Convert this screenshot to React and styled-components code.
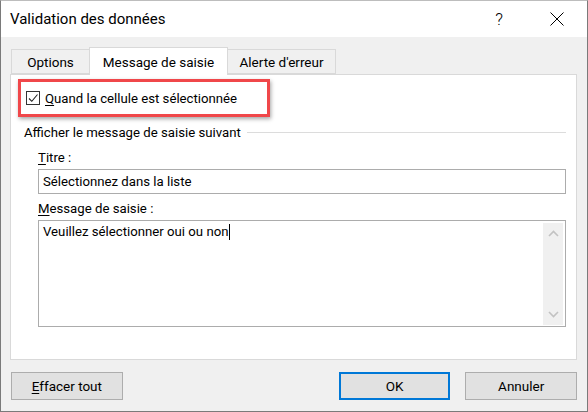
import React from "react";
import styled, { createGlobalStyle } from "styled-components";

const Global = createGlobalStyle`
  html, body { margin: 0; padding: 0; background: #ffffff; }
  body { font-family: Roboto, "Noto Sans", sans-serif; color: #000; }
  * { box-sizing: border-box; }
`;

const Window = styled.div`
  width: 588px;
  height: 412px;
  display: flex;
  flex-direction: column;
  border: 1px solid #7a7a7a;
  border-top-color: #bdbdbd;
  background: #f0f0f0;
  font-size: 13.2px;
`;

const TitleBar = styled.div`
  height: 36px;
  flex: none;
  background: #ffffff;
  display: flex;
  align-items: center;
  padding-left: 9px;
`;

const Title = styled.div`
  font-size: 15px;
  flex: 1;
`;

const Help = styled.div`
  width: 30px;
  text-align: center;
  font-size: 17px;
  margin-right: 14px;
  font-weight: 300;
`;

const Close = styled.div`
  width: 58px;
  height: 36px;
  display: flex;
  align-items: center;
  justify-content: center;
  margin-right: 1px;
`;

const Body = styled.div`
  flex: 1;
  display: flex;
  flex-direction: column;
  padding: 10px 10px 0 9px;
`;

const Tabs = styled.div`
  display: flex;
  align-items: flex-end;
  height: 27px;
  padding-left: 1px;
`;

const Tab = styled.div`
  width: ${(p) => p.$w}px;
  height: ${(p) => (p.$active ? 28 : 25)}px;
  display: flex;
  align-items: center;
  justify-content: center;
  background: ${(p) => (p.$active ? "#ffffff" : "#f0f0f0")};
  border: 1px solid #d9d9d9;
  border-bottom: ${(p) => (p.$active ? "none" : "1px solid #d9d9d9")};
  margin-bottom: ${(p) => (p.$active ? -1 : 0)}px;
  margin-left: ${(p) => (p.$first ? 0 : -1)}px;
  position: relative;
  z-index: ${(p) => (p.$active ? 2 : 1)};
  padding-top: ${(p) => (p.$active ? 0 : 1)}px;
  font-size: 13.5px;
`;

const Panel = styled.div`
  height: 286px;
  background: #ffffff;
  border: 1px solid #d9d9d9;
  display: flex;
  flex-direction: column;
  padding: 3px 10px 0 7px;
`;

const Highlight = styled.div`
  width: 252px;
  height: 38px;
  margin-top: 1px;
  border: 3px solid #f0474a;
  box-shadow: 1px 2px 4px rgba(0, 0, 0, 0.35);
  display: flex;
  align-items: center;
  padding-left: 5px;
  gap: 5px;
`;

const Check = styled.div`
  width: 14px;
  height: 14px;
  border: 1px solid #333;
  background: #fff;
  display: flex;
  align-items: center;
  justify-content: center;
`;

const U = styled.span`
  text-decoration: underline;
  text-underline-offset: 2px;
  text-decoration-thickness: 1px;
`;

const Group = styled.div`
  display: flex;
  align-items: center;
  margin-top: 6px;
  padding-left: 6px;
  gap: 6px;
  height: 18px;
`;

const GroupLine = styled.div`
  flex: 1;
  height: 1px;
  background: #dcdcdc;
`;

const Field = styled.div`
  display: flex;
  flex-direction: column;
  padding-left: 20px;
`;

const Label = styled.div`
  height: 20px;
  display: flex;
  align-items: center;
  margin-top: ${(p) => p.$mt}px;
`;

const Input = styled.div`
  height: 25px;
  margin-top: ${(p) => p.$mt || 0}px;
  border: 1px solid #acacac;
  background: #fff;
  display: flex;
  align-items: center;
  padding-left: 4px;
`;

const TextArea = styled.div`
  height: 107px;
  margin-top: 2px;
  border: 1px solid #acacac;
  background: #fff;
  display: flex;
  padding: 2px 2px 1px 4px;
`;

const AreaText = styled.div`
  flex: 1;
  display: flex;
  align-items: flex-start;
  line-height: 17px;
`;

const Caret = styled.span`
  display: inline-block;
  width: 1px;
  height: 16px;
  background: #000;
  margin-left: 1px;
  margin-top: 1px;
`;

const ScrollBar = styled.div`
  width: 20px;
  background: #f0f0f0;
  display: flex;
  flex-direction: column;
  justify-content: space-between;
  align-items: center;
  padding: 7px 0 7px;
`;

const Footer = styled.div`
  display: flex;
  align-items: center;
  padding-top: 12px;
  padding-left: 1px;
`;

const Button = styled.div`
  width: ${(p) => p.$w}px;
  height: 28px;
  background: #e1e1e1;
  border: ${(p) => (p.$default ? "2px solid #0078d7" : "1px solid #adadad")};
  display: flex;
  align-items: center;
  justify-content: center;
  margin-left: ${(p) => p.$ml || 0}px;
  font-size: 13.5px;
`;

const Chevron = ({ up }) => (
  <svg width="11" height="7" viewBox="0 0 11 7">
    <path
      d={up ? "M1 6 L5.5 1.5 L10 6" : "M1 1 L5.5 5.5 L10 1"}
      fill="none"
      stroke="#c2c2c2"
      strokeWidth="1.6"
    />
  </svg>
);

export default function App() {
  return (
    <>
      <Global />
      <Window>
        <TitleBar>
          <Title>Validation des données</Title>
          <Help>?</Help>
          <Close>
            <svg width="14" height="14" viewBox="0 0 14 14">
              <path d="M0.5 0.5 L13.5 13.5 M13.5 0.5 L0.5 13.5" stroke="#000" strokeWidth="1" />
            </svg>
          </Close>
        </TitleBar>
        <Body>
          <Tabs>
            <Tab $first $w={79}>Options</Tab>
            <Tab $active $w={139}>Message de saisie</Tab>
            <Tab $w={109}>Alerte d'erreur</Tab>
          </Tabs>
          <Panel>
            <Highlight>
              <Check>
                <svg width="12" height="12" viewBox="0 0 12 12">
                  <path d="M2 6.5 L4.8 9.3 L10.5 2.5" fill="none" stroke="#222" strokeWidth="1.1" />
                </svg>
              </Check>
              <span>
                <U>Q</U>uand la cellule est sélectionnée
              </span>
            </Highlight>
            <Group>
              <span>Afficher le message de saisie suivant</span>
              <GroupLine />
            </Group>
            <Field>
              <Label $mt={6}>
                <span>
                  <U>T</U>itre :
                </span>
              </Label>
              <Input $mt={2}>Sélectionnez dans la liste</Input>
              <Label $mt={4}>
                <span>
                  <U>M</U>essage de saisie :
                </span>
              </Label>
              <TextArea>
                <AreaText>
                  Veuillez sélectionner oui ou non
                  <Caret />
                </AreaText>
                <ScrollBar>
                  <Chevron up />
                  <Chevron />
                </ScrollBar>
              </TextArea>
            </Field>
          </Panel>
          <Footer>
            <Button $w={112}>
              <span>
                <U>E</U>ffacer tout
              </span>
            </Button>
            <Button $w={112} $ml={216} $default>
              OK
            </Button>
            <Button $w={112} $ml={15}>
              Annuler
            </Button>
          </Footer>
        </Body>
      </Window>
    </>
  );
}
